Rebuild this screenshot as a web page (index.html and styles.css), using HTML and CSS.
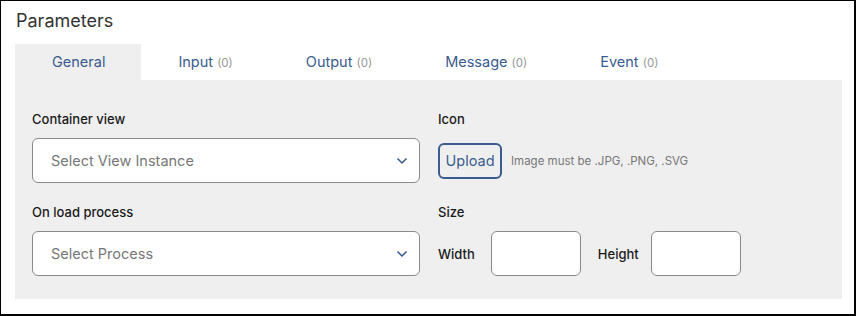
FILE: index.html
```html
<!DOCTYPE html>
<html lang="en">
    <head>
        <meta charset="UTF-8">
        <title>Parameters</title>
        <link rel="stylesheet" href="styles.css">
    </head>
    <body>
        <div class="frame">
            <h2>Parameters</h2>
            <div class="tabs">
                <span class="tab active">General</span>
                <span class="tab">Input <span class="count">(0)</span></span>
                <span class="tab">Output <span class="count">(0)</span></span>
                <span class="tab">Message <span class="count">(0)</span></span>
                <span class="tab">Event <span class="count">(0)</span></span>
            </div>
            <div class="panel">
                <div class="col left">
                    <label class="field-label">Container view</label>
                    <div class="select">
                        <span>Select View Instance</span>
                        <svg class="chevron" width="12" height="8" viewBox="0 0 12 8"><path d="M1.5 1.5 L6 6 L10.5 1.5" fill="none" stroke="#34568b" stroke-width="1.5"/></svg>
                    </div>
                    <label class="field-label second">On load process</label>
                    <div class="select">
                        <span>Select Process</span>
                        <svg class="chevron" width="12" height="8" viewBox="0 0 12 8"><path d="M1.5 1.5 L6 6 L10.5 1.5" fill="none" stroke="#34568b" stroke-width="1.5"/></svg>
                    </div>
                </div>
                <div class="col right">
                    <label class="field-label">Icon</label>
                    <div class="row">
                        <button class="upload">Upload</button>
                        <span class="hint">Image must be .JPG, .PNG, .SVG</span>
                    </div>
                    <label class="field-label second">Size</label>
                    <div class="row">
                        <span class="size-label">Width</span>
                        <input class="size-input" type="text">
                        <span class="size-label height">Height</span>
                        <input class="size-input" type="text">
                    </div>
                </div>
            </div>
        </div>
    </body>
</html>
```

FILE: styles.css
```css
* {
    font-family: Inter, "Noto Sans", sans-serif;
    box-sizing: border-box;
}

body {
    margin: 0;
}

.frame {
    width: 856px;
    height: 316px;
    border-style: solid;
    border-color: #000;
    border-width: 1px 2px 2px 1px;
    padding: 0 12px 0 14px;
    background: #fff;
}

h2 {
    margin: 0;
    padding: 9px 0 0 1px;
    height: 43px;
    font-size: 18px;
    font-weight: 400;
    color: #333;
}

.tabs {
    display: flex;
    height: 36px;
}

.tab {
    padding: 0 36px 0 37px;
    line-height: 36px;
    font-size: 14.5px;
    color: #3a5c8f;
}

.tab.active {
    background: #efefef;
}

.count {
    font-size: 11.5px;
    color: #999;
}

.panel {
    display: flex;
    background: #efefef;
    height: 219px;
    padding: 31px 17px 0 17px;
}

.col {
    display: flex;
    flex-direction: column;
}

.left {
    width: 388px;
    margin-right: 18px;
}

.field-label {
    display: block;
    font-size: 13px;
    line-height: 16px;
    font-weight: 500;
    color: #1a1a1a;
    margin-bottom: 11px;
}

.field-label.second {
    margin-top: 21px;
}

.select {
    height: 45px;
    background: #fff;
    border: 1px solid #8a8a8a;
    border-radius: 6px;
    display: flex;
    align-items: center;
    justify-content: space-between;
    padding: 0 11px 0 18px;
    font-size: 14.5px;
    color: #777;
}

.row {
    display: flex;
    align-items: center;
    height: 45px;
}

.upload {
    width: 64px;
    height: 36px;
    border: 2px solid #3a5c8f;
    border-radius: 6px;
    background: #efefef;
    color: #3a5c8f;
    font-size: 14.5px;
    padding: 0;
}

.hint {
    margin-left: 9px;
    font-size: 11.5px;
    color: #777;
}

.size-label {
    font-size: 13px;
    font-weight: 500;
    color: #1a1a1a;
    margin-right: 16px;
}

.size-label.height {
    margin-left: 17px;
    margin-right: 12px;
}

.size-input {
    width: 90px;
    height: 45px;
    background: #fff;
    border: 1px solid #8a8a8a;
    border-radius: 6px;
}
```
